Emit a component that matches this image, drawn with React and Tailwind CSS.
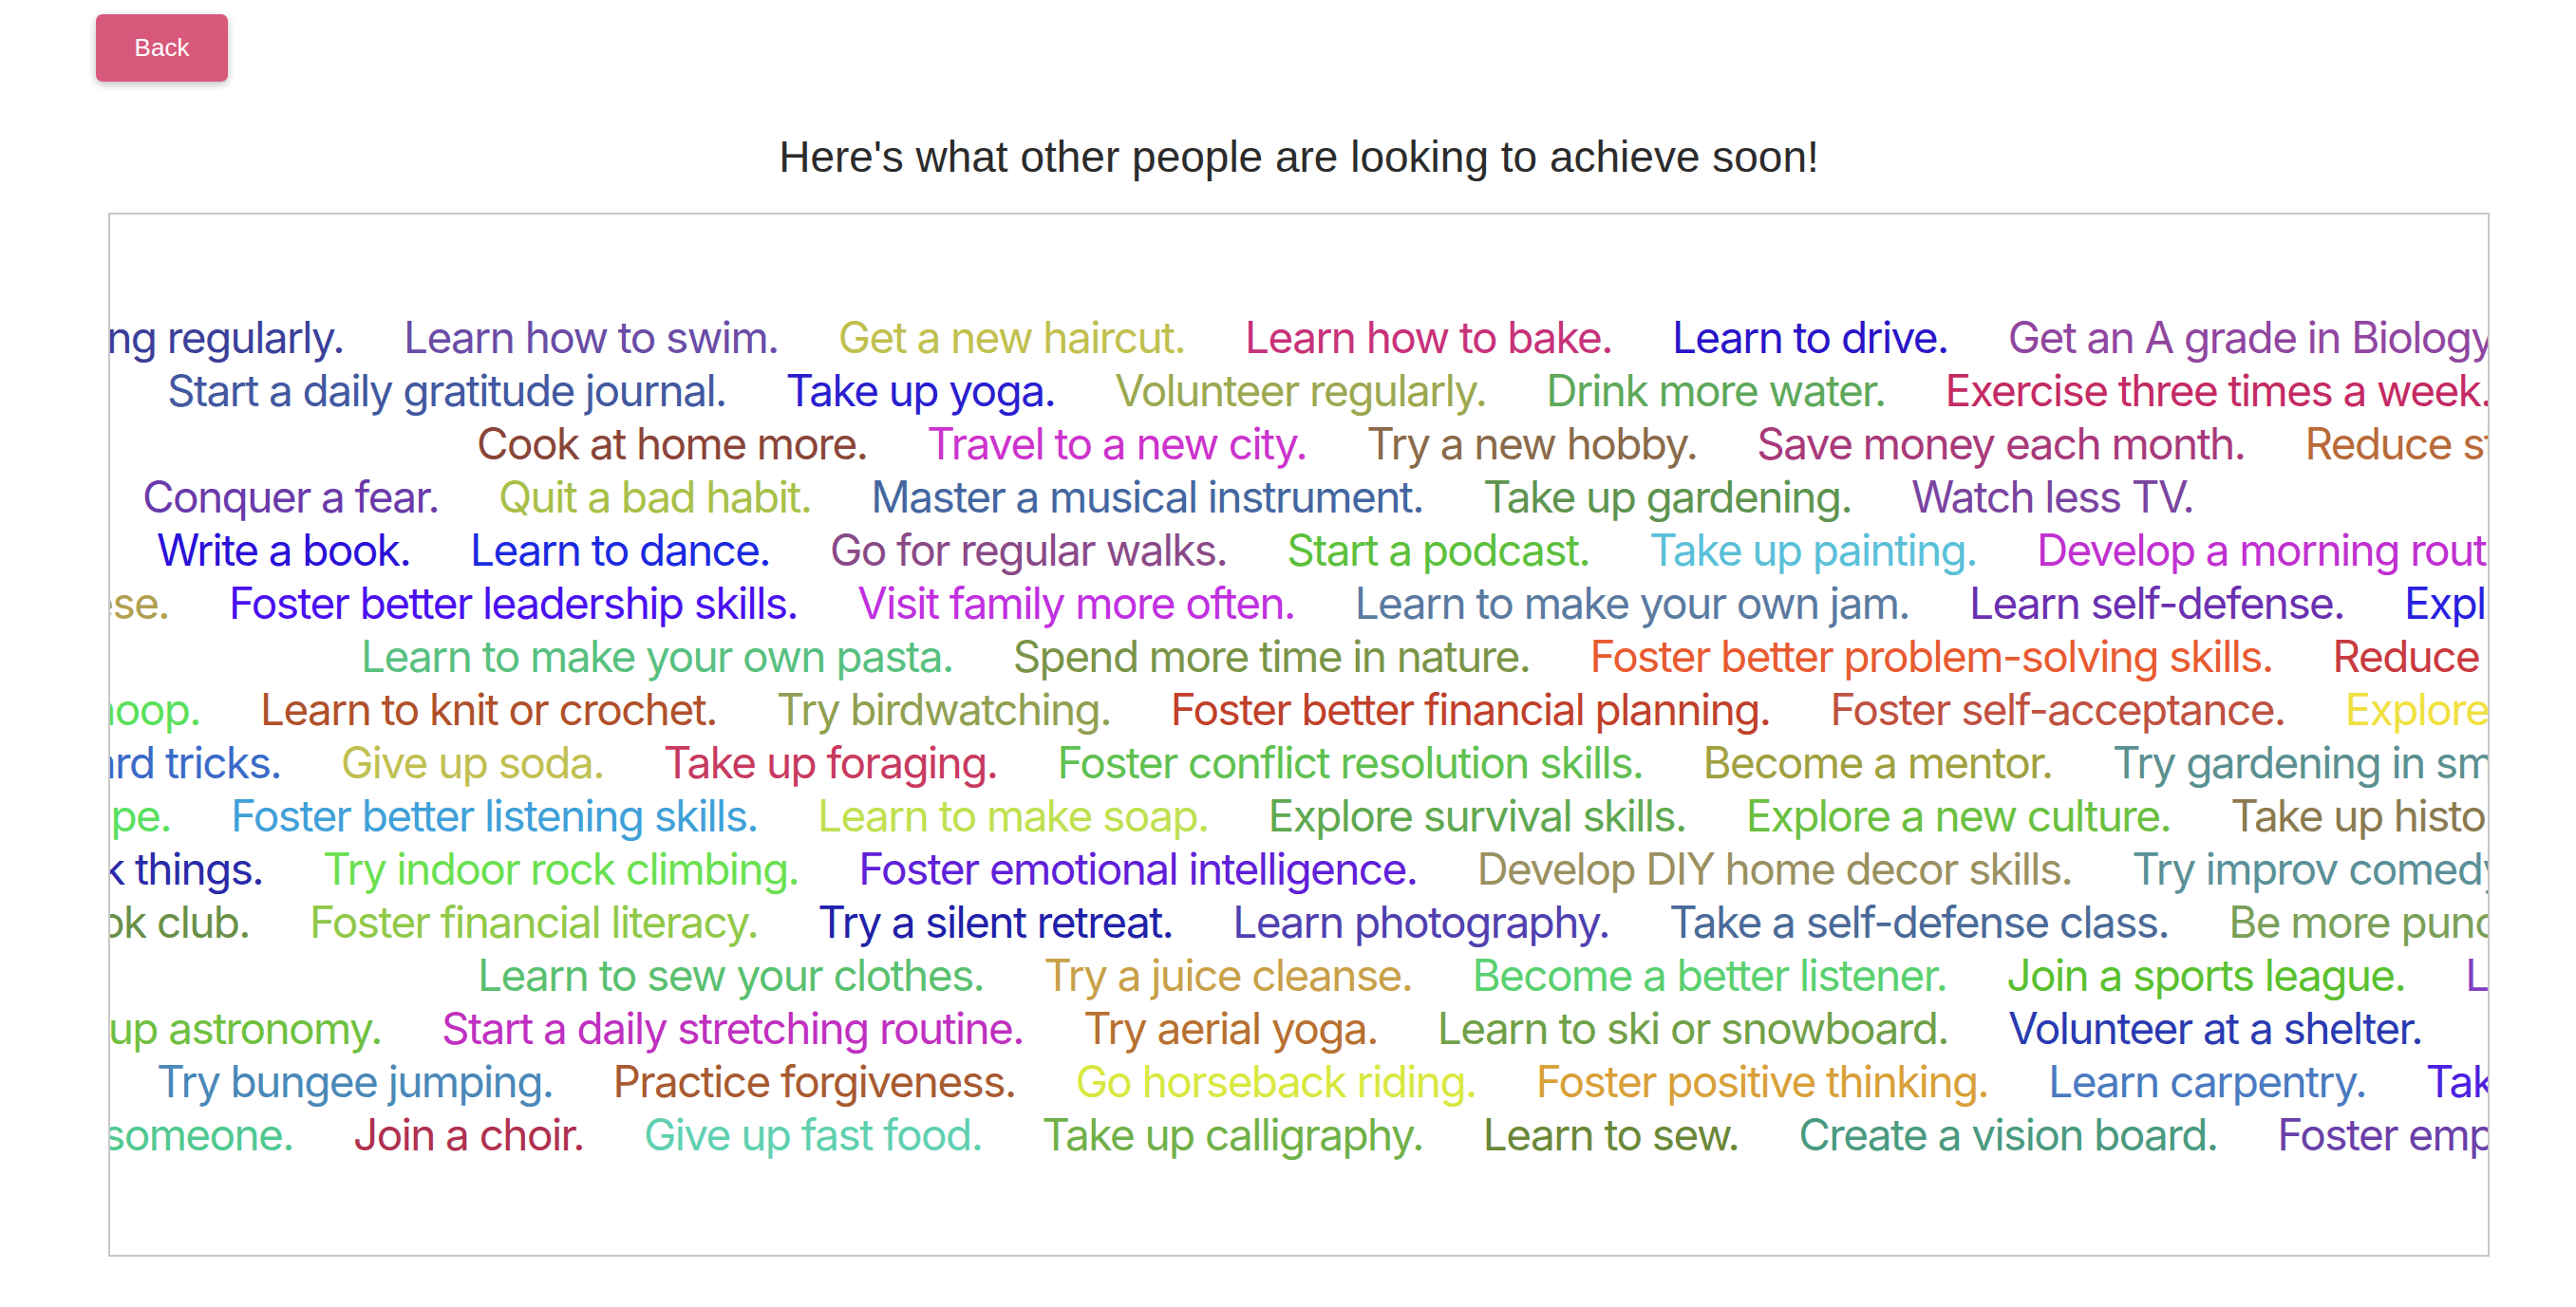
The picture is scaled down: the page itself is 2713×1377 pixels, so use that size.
const rows = [
    {
        lead: { w: "w-[246px]", text: "Start exercising regularly.", color: "text-[#3b3f9a]" },
        items: [
            ["Learn how to swim.", "text-[#6a4ca6]"],
            ["Get a new haircut.", "text-[#c0c04e]"],
            ["Learn how to bake.", "text-[#c7327a]"],
            ["Learn to drive.", "text-[#2a14c8]"],
            ["Get an A grade in Biology.", "text-[#9046a0]"],
        ],
    },
    {
        pad: "pl-[60px]",
        items: [
            ["Start a daily gratitude journal.", "text-[#4258a0]"],
            ["Take up yoga.", "text-[#2a1ed0]"],
            ["Volunteer regularly.", "text-[#9ca850]"],
            ["Drink more water.", "text-[#5ea85a]"],
            ["Exercise three times a week.", "text-[#c42a64]"],
        ],
    },
    {
        pad: "pl-[386px]",
        items: [
            ["Cook at home more.", "text-[#8a4538]"],
            ["Travel to a new city.", "text-[#cc33cc]"],
            ["Try a new hobby.", "text-[#8a6a4a]"],
            ["Save money each month.", "text-[#a83a7a]"],
            ["Reduce stress.", "text-[#b86a38]"],
        ],
    },
    {
        pad: "pl-[34px]",
        items: [
            ["Conquer a fear.", "text-[#6a3aaa]"],
            ["Quit a bad habit.", "text-[#a8c048]"],
            ["Master a musical instrument.", "text-[#4466a0]"],
            ["Take up gardening.", "text-[#5e9450]"],
            ["Watch less TV.", "text-[#7a44a0]"],
        ],
    },
    {
        pad: "pl-[49px]",
        items: [
            ["Write a book.", "text-[#2a10d8]"],
            ["Learn to dance.", "text-[#1a2ae0]"],
            ["Go for regular walks.", "text-[#8a4a88]"],
            ["Start a podcast.", "text-[#5cc03c]"],
            ["Take up painting.", "text-[#5ac0d8]"],
            ["Develop a morning routine.", "text-[#c030d0]"],
        ],
    },
    {
        lead: { w: "w-[62px]", text: "Learn Japanese.", color: "text-[#b0a050]" },
        items: [
            ["Foster better leadership skills.", "text-[#4a10f0]"],
            ["Visit family more often.", "text-[#c030e0]"],
            ["Learn to make your own jam.", "text-[#5a7aa0]"],
            ["Learn self-defense.", "text-[#6a30b0]"],
            ["Explore meditation.", "text-[#2a20e0]"],
        ],
    },
    {
        pad: "pl-[264px]",
        items: [
            ["Learn to make your own pasta.", "text-[#58c080]"],
            ["Spend more time in nature.", "text-[#7a9448]"],
            ["Foster better problem-solving skills.", "text-[#e85a30]"],
            ["Reduce screen time.", "text-[#c83a40]"],
        ],
    },
    {
        lead: { w: "w-[95px]", text: "Learn to hula hoop.", color: "text-[#5ae05a]" },
        items: [
            ["Learn to knit or crochet.", "text-[#b0502a]"],
            ["Try birdwatching.", "text-[#90a050]"],
            ["Foster better financial planning.", "text-[#c0402a]"],
            ["Foster self-acceptance.", "text-[#c05040]"],
            ["Explore a new city.", "text-[#f0e040]"],
        ],
    },
    {
        lead: { w: "w-[180px]", text: "Learn card tricks.", color: "text-[#3a6ac8]" },
        items: [
            ["Give up soda.", "text-[#c0c050]"],
            ["Take up foraging.", "text-[#c83a60]"],
            ["Foster conflict resolution skills.", "text-[#60c050]"],
            ["Become a mentor.", "text-[#a0a040]"],
            ["Try gardening in small spaces.", "text-[#5a9090]"],
        ],
    },
    {
        lead: { w: "w-[64px]", text: "Try a new recipe.", color: "text-[#5ae060]" },
        items: [
            ["Foster better listening skills.", "text-[#40a0d8]"],
            ["Learn to make soap.", "text-[#c0e050]"],
            ["Explore survival skills.", "text-[#60a850]"],
            ["Explore a new culture.", "text-[#6ac040]"],
            ["Take up history.", "text-[#8a7a50]"],
        ],
    },
    {
        lead: { w: "w-[161px]", text: "Rethink things.", color: "text-[#2a2aa8]" },
        items: [
            ["Try indoor rock climbing.", "text-[#6ae050]"],
            ["Foster emotional intelligence.", "text-[#6020d8]"],
            ["Develop DIY home decor skills.", "text-[#9a9060]"],
            ["Try improv comedy.", "text-[#5a9098]"],
        ],
    },
    {
        lead: { w: "w-[147px]", text: "Join a book club.", color: "text-[#6a9048]" },
        items: [
            ["Foster financial literacy.", "text-[#90c848]"],
            ["Try a silent retreat.", "text-[#2020a8]"],
            ["Learn photography.", "text-[#5040b0]"],
            ["Take a self-defense class.", "text-[#4a6a98]"],
            ["Be more punctual.", "text-[#7aa058]"],
        ],
    },
    {
        pad: "pl-[387px]",
        items: [
            ["Learn to sew your clothes.", "text-[#5ac070]"],
            ["Try a juice cleanse.", "text-[#c8a048]"],
            ["Become a better listener.", "text-[#5ad070]"],
            ["Join a sports league.", "text-[#5ac030]"],
            ["Learn to juggle.", "text-[#8040c0]"],
        ],
    },
    {
        lead: { w: "w-[286px]", text: "Take up astronomy.", color: "text-[#70c040]" },
        items: [
            ["Start a daily stretching routine.", "text-[#c030c0]"],
            ["Try aerial yoga.", "text-[#b87030]"],
            ["Learn to ski or snowboard.", "text-[#70a048]"],
            ["Volunteer at a shelter.", "text-[#2a3ab0]"],
        ],
    },
    {
        pad: "pl-[49px]",
        items: [
            ["Try bungee jumping.", "text-[#4a88b8]"],
            ["Practice forgiveness.", "text-[#a85a30]"],
            ["Go horseback riding.", "text-[#d8e840]"],
            ["Foster positive thinking.", "text-[#d8a038]"],
            ["Learn carpentry.", "text-[#4a7ac0]"],
            ["Take up knitting.", "text-[#4a20e0]"],
        ],
    },
    {
        lead: { w: "w-[193px]", text: "Help someone.", color: "text-[#50c890]" },
        items: [
            ["Join a choir.", "text-[#b03050]"],
            ["Give up fast food.", "text-[#60d0b0]"],
            ["Take up calligraphy.", "text-[#70b048]"],
            ["Learn to sew.", "text-[#6a8838]"],
            ["Create a vision board.", "text-[#4a9a80]"],
            ["Foster empathy.", "text-[#6a40a8]"],
        ],
    },
];

const GoalRow = ({ row }) => (
    <div className={"flex h-[56px] items-center gap-[63px] whitespace-nowrap " + (row.pad || "")}>
        {row.lead && (
            <div className={"flex shrink-0 justify-end " + row.lead.w}>
                <span className={"shrink-0 " + row.lead.color}>{row.lead.text}</span>
            </div>
        )}
        {row.items.map(([text, color]) => (
            <span key={text} className={"shrink-0 " + color}>
                {text}
            </span>
        ))}
    </div>
);

const App = () => {
    return (
        <div className="min-h-screen bg-white pt-[15px] font-['Liberation_Sans',Arial,sans-serif]">
            <div className="pl-[101px]">
                <button className="h-[71px] w-[139px] rounded-[7px] bg-[#d8587c] text-[26px] text-white shadow-[0_3px_8px_rgba(0,0,0,0.25)]">
                    Back
                </button>
            </div>

            <div className="ml-[114px] mt-[51px] w-[2508px]">
                <h2 className="text-center text-[46px] leading-[56px] text-[#2b2b2b]">
                    Here's what other people are looking to achieve soon!
                </h2>

                <div className="mt-[31px] h-[1100px] overflow-hidden border-2 border-[#c8c8c8] pt-[101px] font-['Inter',sans-serif] text-[46px] leading-[56px] tracking-[-1.6px]">
                    {rows.map((row, i) => (
                        <GoalRow key={i} row={row} />
                    ))}
                </div>
            </div>
        </div>
    );
};

export default App;
